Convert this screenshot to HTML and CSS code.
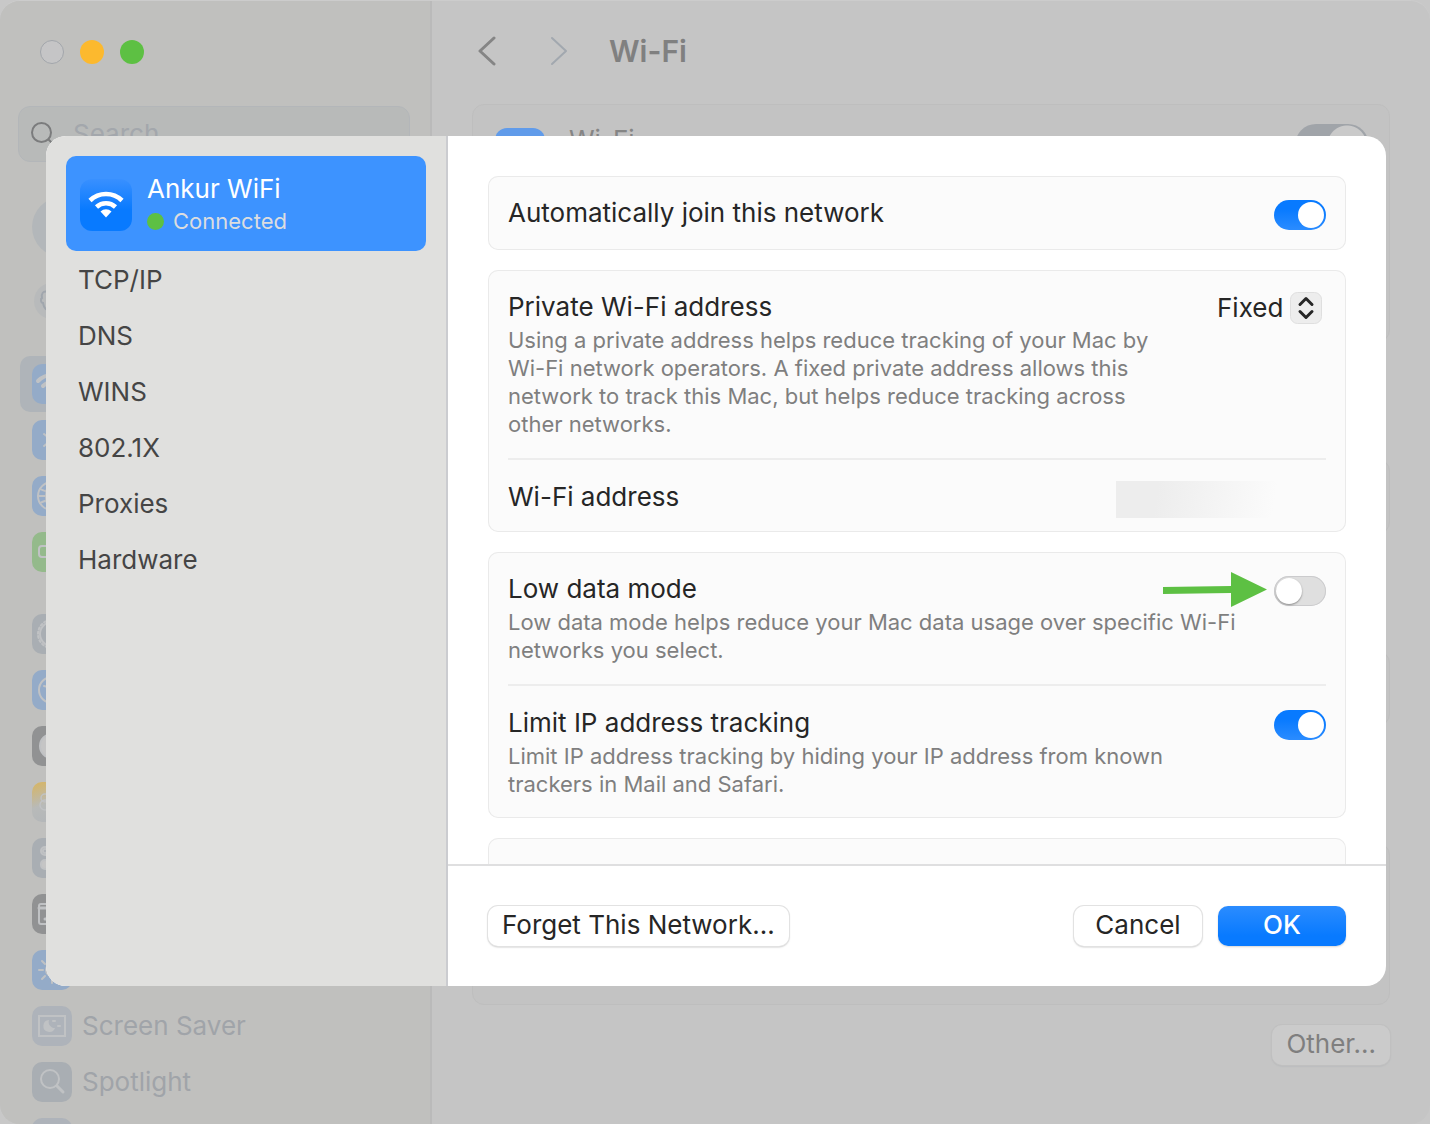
FILE: index.html
```html
<!DOCTYPE html>
<html lang="en">
<head>
<meta charset="utf-8">
<title>Wi-Fi</title>
<link rel="stylesheet" href="styles.css">
</head>
<body>
<div class="window">
  <aside class="sidebar">
    <div class="lights">
      <button class="light light-close" aria-label="Close"></button>
      <button class="light light-min" aria-label="Minimize"></button>
      <button class="light light-zoom" aria-label="Zoom"></button>
    </div>
    <label class="search">
      <svg width="24" height="24" viewBox="0 0 24 24" fill="none" stroke="#7b7c7d" stroke-width="2"><circle cx="10.500" cy="10.500" r="9.500"/><path d="M17.500 17.500l5.500 5.500"/></svg>
      <input class="search-input" type="text" placeholder="Search" aria-label="Search">
    </label>
    <a class="account" href="#" aria-label="Account"></a>
    <a class="family" href="#" aria-label="Family">
      <svg width="36" height="36" viewBox="0 0 36 36" fill="none" stroke="#a0a6ad" stroke-width="2"><path d="M14 9c-5-2-7 2-6 6-2 1-1 5 1 5 1 6 4 8 7 7"/></svg>
    </a>
    <nav class="panes">
      <a class="pane pane-current" href="#" aria-label="Wi-Fi"><span class="tile tile-blue"><svg class="glyph" viewBox="0 0 40 40"><path d="M6 17c8-8 20-8 28 0M11 22c5-5 13-5 18 0" stroke-width="4"/></svg></span></a>
      <a class="pane" href="#" aria-label="Bluetooth"><span class="tile tile-blue"><svg class="glyph" viewBox="0 0 40 40"><path d="M12 14l15 12-7 6V8l7 6-15 12"/></svg></span></a>
      <a class="pane" href="#" aria-label="Network"><span class="tile tile-blue"><svg class="glyph" viewBox="0 0 40 40"><circle cx="20" cy="20" r="14"/><ellipse cx="20" cy="20" rx="6" ry="14"/><path d="M8 13c7 4 17 4 24 0M8 27c7-4 17-4 24 0M6 20h28"/></svg></span></a>
      <a class="pane" href="#" aria-label="Battery"><span class="tile tile-green"><svg class="glyph" viewBox="0 0 40 40"><rect x="7" y="14" width="24" height="11" rx="3"/></svg></span></a>
    </nav>
    <nav class="panes">
      <a class="pane" href="#" aria-label="General"><span class="tile tile-grey"><svg class="glyph" viewBox="0 0 40 40"><circle cx="20" cy="20" r="12"/><circle cx="20" cy="20" r="14" stroke-dasharray="2 2.400"/></svg></span></a>
      <a class="pane" href="#" aria-label="Accessibility"><span class="tile tile-blue"><svg class="glyph" viewBox="0 0 40 40"><circle cx="20" cy="20" r="13"/><path d="M12 16l8 2 8-2M20 18v6l-4 6M20 24l4 6"/></svg></span></a>
      <a class="pane" href="#" aria-label="Appearance"><span class="tile tile-dark"><svg class="glyph" viewBox="0 0 40 40"><circle cx="20" cy="20" r="12" fill="#c5c5c5"/></svg></span></a>
      <a class="pane" href="#" aria-label="Siri"><span class="tile tile-orange"><svg class="glyph" viewBox="0 0 40 40"><circle cx="13" cy="16" r="4" stroke-width="1.500"/><circle cx="13" cy="23" r="5" stroke-width="1.500"/></svg></span></a>
      <a class="pane" href="#" aria-label="Control Center"><span class="tile tile-grey"><svg class="glyph" viewBox="0 0 40 40"><rect x="9" y="9" width="22" height="8" rx="4"/><rect x="9" y="22" width="22" height="9" rx="4" fill="#c5c5c5"/><circle cx="13" cy="13" r="2"/></svg></span></a>
      <a class="pane" href="#" aria-label="Desktop and Dock"><span class="tile tile-dark"><svg class="glyph" viewBox="0 0 40 40"><rect x="7" y="10" width="26" height="20" rx="2"/><path d="M7 14h26M13 25h16" stroke-width="3"/></svg></span></a>
      <a class="pane" href="#" aria-label="Displays"><span class="tile tile-blue"><svg class="glyph" viewBox="0 0 40 40"><circle cx="20" cy="20" r="6"/><path d="M7 20h4M29 20h4M10 11l3 3M30 29l-3-3M10 29l3-3M20 7v4M20 29v4"/></svg></span></a>
      <a class="pane" href="#"><span class="tile tile-pale"><svg class="glyph" viewBox="0 0 40 40"><rect x="7" y="10" width="26" height="20"/><path d="M17 14a6 6 0 1 0 6 8 6 6 0 0 1-6-8z" fill="#c0c2c4" stroke="none"/><path d="M21 15h2M26 20h2" stroke-width="2"/></svg></span>Screen Saver</a>
      <a class="pane" href="#"><span class="tile tile-grey"><svg class="glyph" viewBox="0 0 40 40"><circle cx="18" cy="17" r="9"/><path d="M25 24l6 6" stroke-width="3"/></svg></span>Spotlight</a>
      <a class="pane" href="#" aria-label="Wallpaper"><span class="tile tile-pale"></span></a>
    </nav>
  </aside>

  <main class="main">
    <header class="toolbar">
      <button class="nav-button" aria-label="Back"><svg width="18" height="30" viewBox="0 0 18 30" fill="none" stroke="#858585" stroke-width="3" stroke-linecap="round" stroke-linejoin="round"><path d="M16 2L2 15l14 13"/></svg></button>
      <button class="nav-button" aria-label="Forward"><svg width="18" height="30" viewBox="0 0 18 30" fill="none" stroke="#a2a8af" stroke-width="2" stroke-linecap="round" stroke-linejoin="round"><path d="M2 2l14 13L2 28"/></svg></button>
      <h1 class="title">Wi-Fi</h1>
    </header>
    <section class="groups">
      <div class="group group-wifi">
        <span class="wifi-tile"></span>
        <label class="wifi-label" for="wifi">Wi-Fi</label>
        <input class="wifi-switch" id="wifi" type="checkbox" checked>
      </div>
      <div class="group"></div>
      <div class="group"></div>
      <div class="group group-large"></div>
    </section>
    <div class="actions"><button class="button button-dim">Other...</button></div>
  </main>

  <div class="dialog" role="dialog" aria-label="Ankur WiFi">
    <nav class="tabs">
      <a class="tab-network" href="#">
        <svg class="network-icon" width="52" height="52" viewBox="0 0 52 52" fill="none">
          <defs><linearGradient id="tile" x2="0" y2="1"><stop stop-color="#3990ff"/><stop offset=".6" stop-color="#087aff"/></linearGradient></defs>
          <rect width="52" height="52" rx="12" fill="url(#tile)"/>
          <path d="M10 21.500a23 23 0 0 1 32 0M16.500 28a14 14 0 0 1 19 0" stroke="#fff" stroke-width="4.600" stroke-linecap="butt"/>
          <path d="M20.500 32.500a8 8 0 0 1 11 0L26 38.500z" fill="#fff"/>
        </svg>
        <span class="network-text">
          <span class="network-name">Ankur WiFi</span>
          <span class="network-status"><span class="dot"></span>Connected</span>
        </span>
      </a>
      <a class="tab" href="#">TCP/IP</a>
      <a class="tab" href="#">DNS</a>
      <a class="tab" href="#">WINS</a>
      <a class="tab" href="#">802.1X</a>
      <a class="tab" href="#">Proxies</a>
      <a class="tab" href="#">Hardware</a>
    </nav>
    <div class="panel">
      <div class="cards">
        <section class="card card-single">
          <div class="row">
            <label class="row-title" for="auto">Automatically join this network</label>
            <input class="switch" id="auto" type="checkbox" checked>
          </div>
        </section>
        <section class="card">
          <div class="row">
            <div class="row-text">
              <label class="row-title" for="private">Private Wi-Fi address</label>
              <p class="row-note">Using a private address helps reduce tracking of your Mac by Wi-Fi network operators. A fixed private address allows this network to track this Mac, but helps reduce tracking across other networks.</p>
            </div>
            <div class="picker">
              <select class="picker-select" id="private"><option>Fixed</option></select>
              <svg class="picker-icon" width="32" height="32" viewBox="0 0 32 32" fill="none"><rect x=".5" y=".5" width="31" height="31" rx="7" fill="#ededed" stroke="#dfdfdf"/><path d="M10 12.500l6-6 6 6M10 19.500l6 6 6-6" stroke="#262626" stroke-width="3" stroke-linecap="round" stroke-linejoin="round"/></svg>
            </div>
          </div>
          <div class="row">
            <span class="row-title">Wi-Fi address</span>
            <span class="redacted"></span>
          </div>
        </section>
        <section class="card">
          <div class="row">
            <div class="row-text">
              <label class="row-title" for="low">Low data mode</label>
              <p class="row-note">Low data mode helps reduce your Mac data usage over specific Wi-Fi networks you select.</p>
            </div>
            <div class="pointed">
              <svg class="arrow" width="104" height="36" viewBox="0 0 104 36"><path d="M0 15l68-1V0l36 17.500L68 35V21l-68 1z" fill="#5dc043"/></svg>
              <input class="switch" id="low" type="checkbox">
            </div>
          </div>
          <div class="row">
            <div class="row-text">
              <label class="row-title" for="limit">Limit IP address tracking</label>
              <p class="row-note">Limit IP address tracking by hiding your IP address from known trackers in Mail and Safari.</p>
            </div>
            <input class="switch" id="limit" type="checkbox" checked>
          </div>
        </section>
        <section class="card card-single"></section>
      </div>
      <footer class="footer">
        <button class="button">Forget This Network...</button>
        <span class="footer-end">
          <button class="button button-fixed">Cancel</button>
          <button class="button button-fixed button-primary">OK</button>
        </span>
      </footer>
    </div>
  </div>
</div>
</body>
</html>
```
FILE: styles.css
```css
* { box-sizing: border-box; }

body {
  margin: 0;
  background: #c8c8c8;
  font: 26px/32px Inter, "Liberation Sans", sans-serif;
  color: #262626;
}

button, input, select { font: inherit; color: inherit; margin: 0; }
a { color: inherit; text-decoration: none; }

.window {
  position: relative;
  display: flex;
  height: 100vh;
  overflow: hidden;
  border-top: 1px solid #cccccc;
  border-radius: 20px;
  background: #c5c5c5;
}

/* Settings sidebar */
.sidebar {
  flex: none;
  width: 432px;
  padding: 39px 20px 0 18px;
  background: #c0c0be;
  border-right: 2px solid #bababa;
}
.lights { display: flex; gap: 16px; padding-left: 22px; }
.light { width: 24px; height: 24px; padding: 0; border: 0; border-radius: 50%; }
.light-close { background: #c5c5c6; border: 1px solid #a2a6ab; }
.light-min { background: #fcb92e; }
.light-zoom { background: #5dc043; }

.search {
  display: flex;
  align-items: center;
  gap: 18px;
  height: 56px;
  margin-top: 42px;
  padding-left: 12px;
  border: 1px solid #b3b6b9;
  border-radius: 12px;
  background: #b8bab9;
}
.search-input { flex: 1; min-width: 0; padding: 0; border: 0; background: none; }
.search-input::placeholder { color: #a3a7ac; opacity: 1; }

.account {
  display: block;
  width: 60px;
  height: 60px;
  margin: 35px 0 0 14px;
  border-radius: 50%;
  background: #b3b7ba;
}
.family {
  display: flex;
  width: 36px;
  height: 36px;
  margin: 26px 0 37px 16px;
  border-radius: 50%;
  background: #b8babb;
}

.panes { margin-bottom: 26px; }
.pane {
  display: flex;
  align-items: center;
  gap: 10px;
  height: 56px;
  padding-left: 14px;
  color: #a0a4a9;
}
.pane-current { margin-left: 2px; padding-left: 12px; border-radius: 10px; background: #afb4b9; }
.tile { display: flex; width: 40px; height: 40px; border-radius: 10px; overflow: hidden; }
.tile-blue { background: #94abc8; }
.tile-green { background: #94ba8b; }
.tile-grey { background: #a9aeb3; }
.tile-pale { background: #aeb3ba; }
.tile-dark { background: #919293; }
.tile-orange { background: linear-gradient(160deg, #d8b560, #b8bab9 50%, #b1b5b9); }
.glyph { width: 40px; height: 40px; fill: none; stroke: #c0c2c4; stroke-width: 2; stroke-linecap: round; }

/* Wi-Fi pane */
.main { flex: 1; min-width: 0; padding: 30px 40px 0; }
.toolbar { display: flex; align-items: center; height: 40px; padding-left: 6px; }
.nav-button { display: flex; width: 18px; margin-right: 54px; padding: 0; border: 0; background: none; }
.nav-button + .nav-button { margin-right: 41px; }
.title { margin: 0; font-size: 30px; line-height: 40px; font-weight: 600; color: #808080; }

.groups { display: flex; flex-direction: column; gap: 117px; margin-top: 33px; }
.group { height: 75px; border: 1px solid #bebebe; border-radius: 12px; background: #c3c3c3; }
.group-large { height: 162px; }
.group-wifi { display: flex; align-items: flex-start; height: 238px; padding: 15px 20px 0 22px; color: #858585; }
.wifi-tile { width: 50px; height: 50px; margin: 8px 24px 0 0; border-radius: 12px; background: #609bea; }
.wifi-label { flex: 1; padding-top: 4px; }
.wifi-switch {
  appearance: none;
  width: 74px;
  height: 42px;
  margin-top: 4px;
  border-radius: 21px;
  background: radial-gradient(circle at 52px 21px, #cacaca 19px, #a0a4a9 20px);
}

.actions { display: flex; justify-content: flex-end; margin-top: 20px; }

.button {
  height: 40px;
  padding: 0 14px 2px;
  border: 0;
  border-radius: 10px;
  background: #fff;
  line-height: 36px;
  box-shadow: 0 0 0 1px #e2e2e2, 0 1px 2px #a9a9a9;
}
.button-fixed { width: 128px; }
.button-primary { background: linear-gradient(#2b8cff, #087aff 75%); color: #fff; font-weight: 500; box-shadow: 0 1px 2px #d5d5d5; }
.button-dim { background: #cbcbcb; color: #7f7f7f; box-shadow: 0 0 0 1px #c0c0c0, 0 1px 2px #a9adb1; }

/* Network details sheet, laid over the window */
.dialog {
  position: absolute;
  inset: 135px 44px 138px 46px;
  display: flex;
  overflow: hidden;
  border-radius: 20px;
  background: #fff;
}
.tabs { flex: 0 0 402px; padding: 20px; background: #e0e0de; border-right: 2px solid #cbccd0; }
.tab-network {
  display: flex;
  gap: 15px;
  height: 95px;
  margin-bottom: 1px;
  padding: 17px 14px;
  border-radius: 10px;
  background: #3d93ff;
  color: #fff;
}
.network-icon { margin-top: 6px; }
.network-text { display: flex; flex-direction: column; }
.network-status { display: flex; align-items: center; gap: 9px; font-size: 22px; color: #dcdddf; }
.dot { width: 17px; height: 17px; border-radius: 50%; background: #5dc043; }
.tab { display: flex; align-items: center; height: 56px; padding-left: 12px; color: #454545; }

.panel { flex: 1; min-width: 0; display: flex; flex-direction: column; }
.cards {
  flex: 1;
  min-height: 0;
  display: flex;
  flex-direction: column;
  gap: 20px;
  padding: 40px 40px 0;
  overflow: hidden;
}
.card {
  flex: none;
  padding: 0 20px;
  border-radius: 10px;
  background: #fbfbfb;
  box-shadow: inset 0 0 0 1px #eaeaea;
}
.card-single { min-height: 74px; }
.row { display: flex; align-items: flex-start; gap: 32px; padding: 21px 0 19px; }
.row + .row { border-top: 2px solid #ededed; }
.row-text { flex: 1; min-width: 0; }
.row-title { display: block; flex: 1; }
.row-note { margin: 3px 0 1px; font-size: 22px; line-height: 28px; color: #7f7f7f; }

.switch {
  flex: none;
  appearance: none;
  display: block;
  width: 52px;
  height: 30px;
  margin-top: 3px;
  padding: 2px;
  border-radius: 15px;
  background: #dfdfdf;
  box-shadow: inset 0 0 0 1px #cbcbcd;
}
.switch::before {
  content: "";
  display: block;
  width: 26px;
  height: 26px;
  border-radius: 50%;
  background: #fff;
  box-shadow: 0 1px 2px #8a8a8a;
}
.switch:checked { background: linear-gradient(#087aff 30%, #2b8cff); box-shadow: none; }
.switch:checked::before { margin-left: 22px; box-shadow: none; }

.picker { display: grid; align-items: center; justify-items: end; margin: 1px 4px 0 0; }
.picker-select { grid-area: 1 / 1; appearance: none; height: 32px; padding: 0 38px 3px 0; border: 0; background: none; }
.picker-icon { grid-area: 1 / 1; pointer-events: none; }

.redacted {
  width: 210px;
  height: 37px;
  margin-bottom: -5px;
  background: linear-gradient(100deg, #ededed 20%, #fbfbfb 75%);
}

.pointed { position: relative; }
.arrow { position: absolute; right: 59px; top: -1px; }

.footer {
  display: flex;
  justify-content: space-between;
  padding: 40px;
  border-top: 2px solid #dfdfe0;
}
.footer-end { display: flex; gap: 16px; }
```
